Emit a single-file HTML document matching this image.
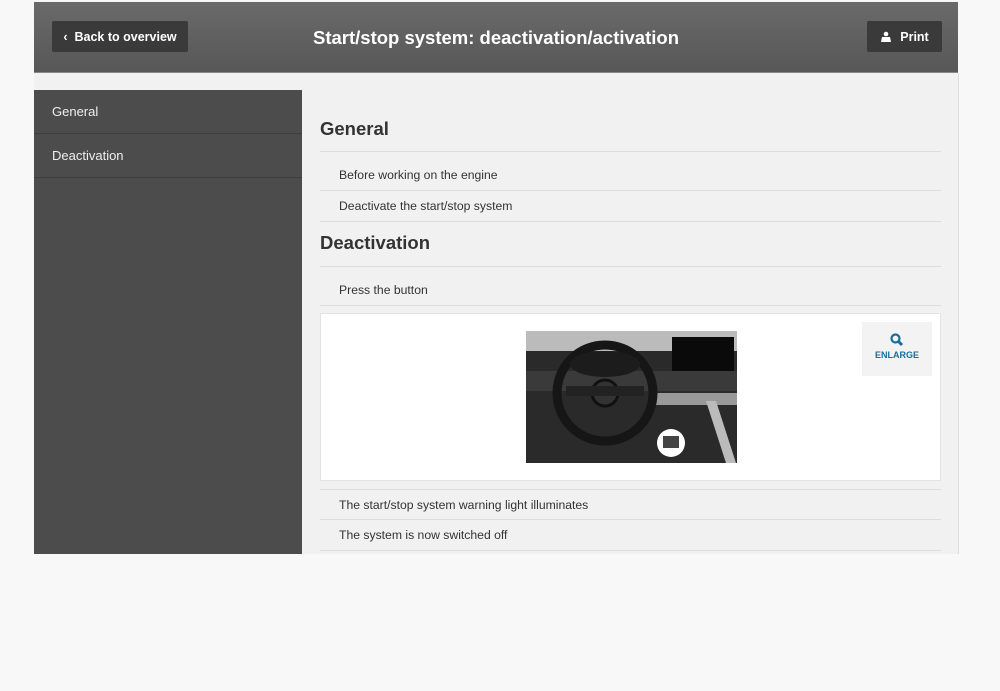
<!DOCTYPE html>
<html><head><style>
body{margin:0;width:1000px;height:691px;background:#f8f8f8;font-family:"Liberation Sans",sans-serif;position:relative;overflow:hidden}
.hdr{position:absolute;left:34px;top:2px;width:924px;height:70px;background:linear-gradient(#6a6a6a,#575757);border-bottom:1px solid #888}
.btn{position:absolute;background:#3a3a3a;color:#fff;font-weight:bold;font-size:12.5px;border-radius:2px;display:flex;align-items:center;justify-content:center}
.title{position:absolute;left:0;width:924px;top:25px;text-align:center;color:#fff;font-size:18.5px;font-weight:bold}
.main{position:absolute;left:34px;top:73px;width:924px;height:481px;background:#f1f1f1;border-right:1px solid #ddd}
.side{position:absolute;left:34px;top:90px;width:268px;height:464px;background:#4c4c4c}
.side div{height:43px;border-bottom:1px solid #3e3e3e;color:#eee;font-size:13px;padding-left:18px;line-height:43px}
.h{position:absolute;left:320px;width:621px;font-size:18.5px;font-weight:bold;color:#333;border-bottom:1px solid #ddd}
.r{position:absolute;left:320px;width:621px;font-size:12.2px;color:#333;padding-left:19px;box-sizing:border-box;border-bottom:1px solid #ddd}
</style></head><body>
<div class="hdr">
<div class="btn" style="left:18px;top:19px;width:136px;height:31px">&#8249;&nbsp;&nbsp;Back to overview</div>
<div class="title">Start/stop system: deactivation/activation</div>
<div class="btn" style="left:833px;top:19px;width:75px;height:31px"><svg width="12" height="12" viewBox="0 0 12 12" style="margin-right:8px"><circle cx="6" cy="3" r="2.3" fill="#fff"/><path d="M1 11 L2 6 H10 L11 11Z" fill="#fff"/></svg>Print</div>
</div>
<div class="main"></div>
<div class="side"><div>General</div><div>Deactivation</div></div>
<div class="h" style="top:118px;height:33px">General</div>
<div class="r" style="top:162px;height:29px;line-height:27px">Before working on the engine</div>
<div class="r" style="top:192px;height:30px;line-height:28px">Deactivate the start/stop system</div>
<div class="h" style="top:232px;height:34px">Deactivation</div>
<div class="r" style="top:276px;height:30px;line-height:28px">Press the button</div>
<div style="position:absolute;left:320px;top:313px;width:621px;height:168px;background:#fff;border:1px solid #e3e3e3;box-sizing:border-box"></div>
<svg style="position:absolute;left:526px;top:331px" width="211" height="132" viewBox="0 0 211 132">
<rect width="211" height="132" fill="#2a2a2a"/>
<rect width="211" height="20" fill="#bbb"/>
<rect x="146" y="6" width="62" height="34" fill="#0a0a0a"/>
<rect x="0" y="40" width="211" height="20" fill="#3a3a3a"/>
<rect x="130" y="62" width="81" height="12" fill="#999"/>
<circle cx="79" cy="62" r="48" fill="none" stroke="#161616" stroke-width="9"/>
<ellipse cx="79" cy="33" rx="35" ry="13" fill="#1c1c1c"/>
<circle cx="79" cy="62" r="13" fill="#333" stroke="#111" stroke-width="3"/>
<rect x="40" y="55" width="78" height="10" fill="#222"/>
<path d="M180 70 L200 132 L210 132 L190 70Z" fill="#bbb"/>
<circle cx="145" cy="112" r="14" fill="#fff"/>
<rect x="137" y="105" width="16" height="12" fill="#444"/>
</svg>
<div style="position:absolute;left:862px;top:322px;width:70px;height:54px;background:#f3f3f3;text-align:center;color:#1a6e9e;font-size:9px;font-weight:bold">
<svg width="16" height="16" viewBox="0 0 16 16" style="margin-top:10px"><circle cx="6.5" cy="6.5" r="4" fill="none" stroke="#1a6e9e" stroke-width="2.2"/><path d="M9.5 9.5 L13 13" stroke="#1a6e9e" stroke-width="3"/></svg>
<div>ENLARGE</div></div>
<div class="r" style="top:489px;height:31px;line-height:30px;border-top:1px solid #ddd">The start/stop system warning light illuminates</div>
<div class="r" style="top:521px;height:30px;line-height:28px">The system is now switched off</div>
</body></html>
